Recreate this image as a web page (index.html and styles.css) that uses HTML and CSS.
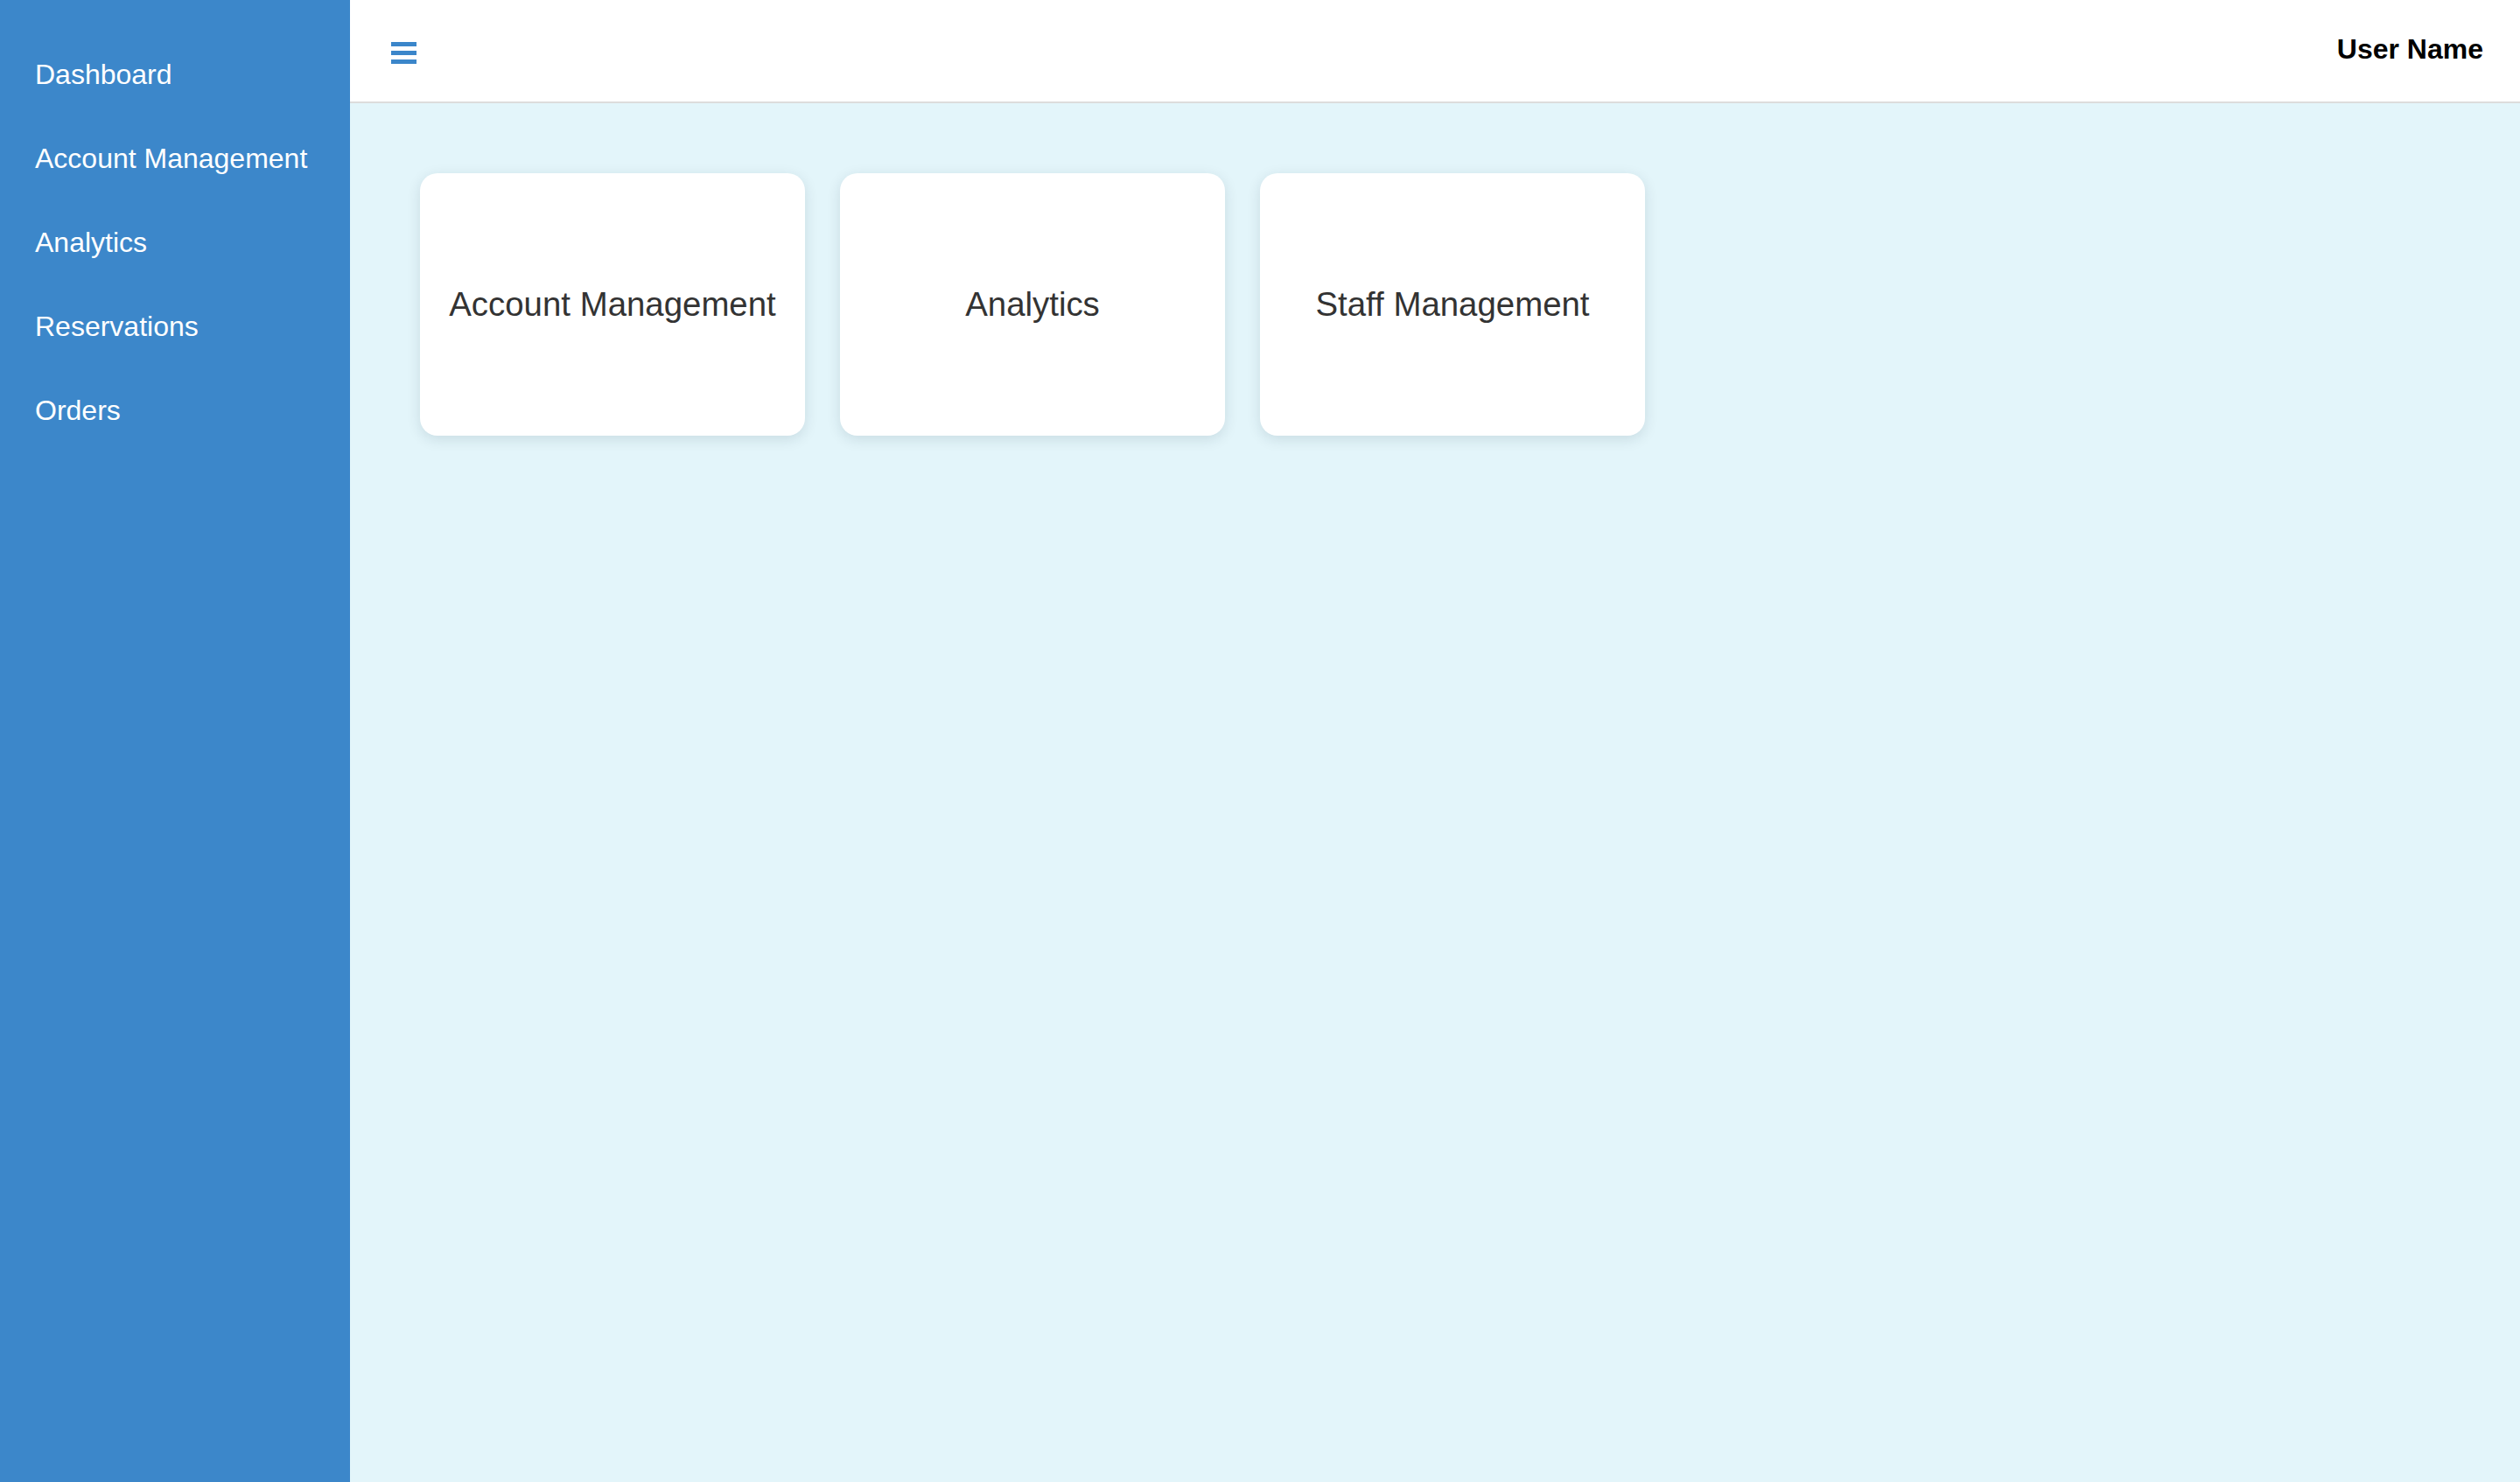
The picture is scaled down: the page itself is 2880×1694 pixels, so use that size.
FILE: index.html
```html
<!DOCTYPE html>
<html lang="en">
<head>
<meta charset="utf-8">
<title>Dashboard</title>
<link rel="stylesheet" href="styles.css">
</head>
<body>
<div class="app">
  <nav class="sidebar">
    <a class="nav-item" href="#">Dashboard</a>
    <a class="nav-item" href="#">Account Management</a>
    <a class="nav-item" href="#">Analytics</a>
    <a class="nav-item" href="#">Reservations</a>
    <a class="nav-item" href="#">Orders</a>
  </nav>
  <div class="main">
    <header class="topbar">
      <button class="menu-btn" aria-label="Menu">
        <svg width="29" height="25" viewBox="0 0 29 25"><rect x="0" y="0" width="29" height="5" fill="#3b86ca"/><rect x="0" y="10" width="29" height="5" fill="#3b86ca"/><rect x="0" y="20" width="29" height="5" fill="#3b86ca"/></svg>
      </button>
      <div class="user-name">User Name</div>
    </header>
    <section class="content">
      <div class="card">Account Management</div>
      <div class="card">Analytics</div>
      <div class="card">Staff Management</div>
    </section>
  </div>
</div>
</body>
</html>
```
FILE: styles.css
```css
html, body {
  margin: 0;
  padding: 0;
  height: 100%;
}
body {
  font-family: "Liberation Sans", Arial, Helvetica, sans-serif;
  background: #e3f5fa;
}
.app {
  display: flex;
  min-height: 1694px;
}
.sidebar {
  width: 400px;
  flex: 0 0 400px;
  background: #3c87ca;
  display: flex;
  flex-direction: column;
  padding-top: 37px;
  box-sizing: border-box;
}
.nav-item {
  display: block;
  color: #ffffff;
  text-decoration: none;
  font-size: 32px;
  line-height: 36px;
  padding: 30px 40px;
}
.main {
  flex: 1;
  display: flex;
  flex-direction: column;
  background: #e3f5fa;
}
.topbar {
  height: 116px;
  background: #ffffff;
  border-bottom: 2px solid #dcdcdc;
  display: flex;
  align-items: center;
  justify-content: space-between;
  padding: 0 42px 0 47px;
}
.menu-btn {
  border: none;
  background: none;
  padding: 0;
  margin-top: 5px;
  display: flex;
  cursor: pointer;
}
.user-name {
  font-weight: bold;
  font-size: 32px;
  color: #000000;
  margin-bottom: 4px;
}
.content {
  display: flex;
  gap: 40px;
  padding: 80px;
  align-items: flex-start;
}
.card {
  width: 440px;
  height: 300px;
  background: #ffffff;
  border-radius: 20px;
  box-shadow: 0 4px 16px rgba(0, 40, 60, 0.12);
  display: flex;
  align-items: center;
  justify-content: center;
  font-size: 38.4px;
  color: #333333;
}
```
